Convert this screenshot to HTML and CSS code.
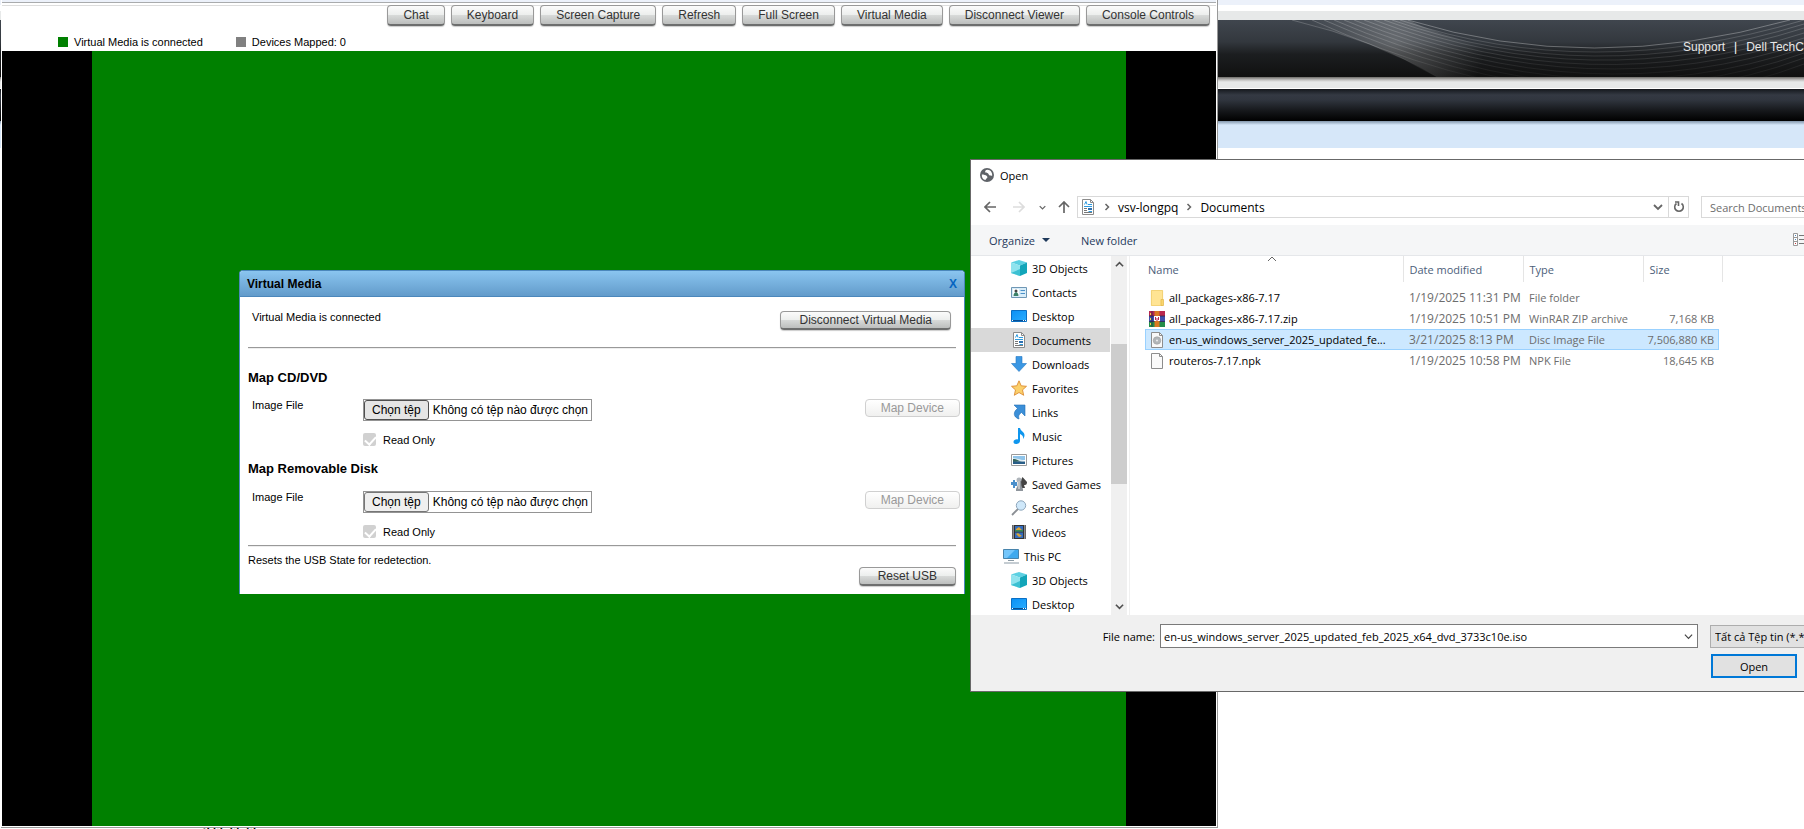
FILE: index.html
```html
<!DOCTYPE html>
<html lang="en">
<head>
  <meta charset="UTF-8" />
  <meta name="viewport" content="width=device-width, initial-scale=1.0" />
  <title>Virtual Console</title>
  <link rel="stylesheet" href="styles.css">
</head>
<body>
  <svg class="sprite" aria-hidden="true">
    <linearGradient id="blue" x1="0" y1="0" x2="1" y2="1">
      <stop offset="0" stop-color="#0a90f5" />
      <stop offset="1" stop-color="#2aadff" />
    </linearGradient>
    <symbol id="i-objects" viewBox="0 0 16 16">
      <path fill="#5cd0e2" d="M0 2.500L8 0l8 2.500-7 3z" />
      <path fill="#8fe3ee" d="M0 2.500l9 3V16l-9-3z" />
      <path fill="#12a5b9" d="M16 2.500l-7 3V16l7-3z" />
      <path fill="#3cc0d2" d="M0 13l9-4v7z" />
    </symbol>
    <symbol id="i-contacts" viewBox="0 0 16 16">
      <path fill="#d9edf9" stroke="#6f97b5" d="M.5 3.500h15v10H.5z" />
      <path fill="#fff" d="M2 5h6v7H2z" />
      <circle cx="5" cy="7" r="1.500" fill="#444" />
      <path fill="#3b8068" d="M2.500 12c0-5 5-5 5 0z" />
      <path stroke="#4a90c8" d="M9.500 6.500H14M9.500 9.500H14" />
    </symbol>
    <symbol id="i-desktop" viewBox="0 0 16 16">
      <path fill="url(#blue)" stroke="#0a6fc4" d="M.5 2.500h15v11H.5z" />
      <path fill="#084f93" d="M1 12h14v1H1z" />
      <path fill="#fff" d="M1 12h1v1H1zM12 12h1v1h-1zM14 12h1v1h-1z" />
    </symbol>
    <symbol id="i-documents" viewBox="0 0 16 16">
      <path fill="#fff" stroke="#8b8b8b" d="M2.500.5h8l3 3v12h-11z" />
      <path fill="none" stroke="#8b8b8b" d="M10.500.5v3h3" />
      <path fill="none" stroke="#2d9be0" d="M4.500 5.500L6 2.500l1 3M8 5.500h4M4 7.500h8M8.500 12.500H12" />
      <path fill="none" stroke="#777" d="M4 9.500h3M8.500 9.500H12M4 11.500h3M4 13.500h8" />
      <path fill="#2d6fb0" d="M8 9h4v2H8z" />
    </symbol>
    <symbol id="i-downloads" viewBox="0 0 16 16">
      <path fill="#3b97e3" stroke="#2277c4" stroke-width=".6" d="M5 .5h6v7h4.500L8 15.500.5 7.500H5z" />
    </symbol>
    <symbol id="i-favorites" viewBox="0 0 16 16">
      <path fill="#fbd06b" stroke="#dc8c34" stroke-width=".9" d="M8 .8l2.200 5 5.300.5-4 3.600 1.200 5.400L8 12.500l-4.700 2.800 1.200-5.400-4-3.600 5.300-.5z" />
    </symbol>
    <symbol id="i-links" viewBox="0 0 16 16">
      <path fill="#3b8fd8" stroke="#2370b5" stroke-width=".6" d="M3 1h11v11l-3.500-3.500C8 10 7 12 8 15c-6-2-6-7-1.500-10.500z" />
    </symbol>
    <symbol id="i-music" viewBox="0 0 16 16">
      <path fill="#0f96ee" d="M7 0h2c.5 3 4.500 4 4.500 7 0 2-1 3.500-1.500 4 .5-3-.8-4-3-5v7c0 2-2 3-4 3-1.500 0-2.500-1-2.500-2C2.500 12 5 11 7 11.500z" />
    </symbol>
    <symbol id="i-pictures" viewBox="0 0 16 16">
      <path fill="#fff" stroke="#9a9a9a" d="M.5 2.500h15v11H.5z" />
      <path fill="#8fc4ea" d="M2 4h12v4H2z" />
      <path fill="#dcebf2" d="M2 6l6 1 6 2H2z" />
      <path fill="#37675c" d="M2 7c4 0 6 2 9 2.500L2 10z" />
      <path fill="#285d87" d="M2 9.500h12V12H2z" />
    </symbol>
    <symbol id="i-games" viewBox="0 0 16 16">
      <path fill="#444" d="M11.500 1L16 6c0 3-1.500 3-3 3l1 3h-4V4z" />
      <path fill="#4a8fcb" d="M0 6h2V4h2v2h2v4H4v2H2V9H0z" />
      <circle cx="8" cy="4" r="2.500" fill="#aeb4ba" />
      <path fill="#8e959c" d="M7 5h3l.5 5 1.500 3v2H5v-2l1.500-3z" />
      <path stroke="#eceff1" d="M8 5v8" />
    </symbol>
    <symbol id="i-search" viewBox="0 0 16 16">
      <path stroke="#8b8f94" stroke-width="1.800" d="M1 15l6-6" />
      <circle cx="10" cy="5.500" r="4.700" fill="#cfe8fa" stroke="#8ea6bb" />
    </symbol>
    <symbol id="i-videos" viewBox="0 0 16 16">
      <path fill="#333" d="M1 1h14v14H1z" />
      <path stroke="#eee" stroke-width="1.500" stroke-dasharray="1 1" d="M2.200 1.500v13.500M13.800 1.500v13.500" />
      <path fill="#326cc0" d="M4 2h8v5.500H4zM4 8.500h8V14H4z" />
      <path fill="#d9a336" d="M5 5l3-2 3 3v1H5zM5 10l2-1 4 3-3 1z" />
      <path fill="#3b8b51" d="M4 6h8v1.500H4z" />
    </symbol>
    <symbol id="i-pc" viewBox="0 0 16 16">
      <path fill="#3fa9ee" stroke="#4884ac" d="M.5 1.500h15v9H.5z" />
      <path fill="#74c6fb" d="M1 2h11L4 10H1z" />
      <path stroke="#8b9aa5" d="M5 12.500h6M1 15h15" />
    </symbol>
    <symbol id="i-folder" viewBox="0 0 16 16">
      <path fill="#ffe493" stroke="#efc75b" stroke-width=".8" d="M2.400.4h11.200v15.200H2.400z" />
      <path fill="#f9d66e" stroke="#e4b84c" stroke-width=".7" d="M12 9.500h2.500v6H12z" />
    </symbol>
    <symbol id="i-zip" viewBox="0 0 16 16">
      <path fill="#b8284f" d="M0 0h16v5H0z" />
      <path fill="#3e4fae" d="M0 5h16v6H0z" />
      <path fill="#228c49" d="M0 11h16v5H0z" />
      <path stroke="#2c2140" stroke-width=".7" d="M0 5h16M0 10.500h16M3 0v16" />
      <path fill="#d97923" d="M5.500 0h5v16h-5z" />
      <path fill="#fff" d="M5 5h6v5H5z" />
      <path fill="none" stroke="#b8284f" d="M6.500 6v3M9.500 6v3M8 7v3" />
      <path fill="#f0d34a" d="M1 2h1v2H1zM1 7h1v2H1zM1 12h1v2H1z" />
    </symbol>
    <symbol id="i-disc" viewBox="0 0 16 16">
      <path fill="#f8f8f8" stroke="#8d8d8d" d="M2.500.5h8l3 3v12h-11z" />
      <path fill="none" stroke="#8d8d8d" d="M10.500.5v3h3" />
      <circle cx="8" cy="8.500" r="3.800" fill="#b1b5b8" stroke="#999" stroke-width=".5" />
      <circle cx="8" cy="8.500" r="1" fill="#eee" />
    </symbol>
    <symbol id="i-file" viewBox="0 0 16 16">
      <path fill="#fafafa" stroke="#8d8d8d" d="M2.500.5h8l3 3v12h-11z" />
      <path fill="none" stroke="#8d8d8d" d="M10.500.5v3h3" />
    </symbol>
    <symbol id="i-down" viewBox="0 0 10 10">
      <path fill="none" stroke="currentColor" stroke-width="1.800" d="M1 3l4 4 4-4" />
    </symbol>
    <symbol id="i-right" viewBox="0 0 10 10">
      <path fill="none" stroke="#666" stroke-width="1.500" d="M3.500 2L6.500 5 3.500 8" />
    </symbol>
    <symbol id="i-arrow" viewBox="0 0 12 12">
      <path fill="none" stroke="currentColor" stroke-width="1.700" d="M6 1L1 6l5 5M1 6h11" />
    </symbol>
  </svg>

  <!-- management page behind the windows -->
  <div class="page">
    <div class="page-top"></div>
    <header class="banner">
      <svg class="banner-art" viewBox="0 0 604 57" aria-hidden="true">
        <defs>
          <radialGradient id="sheen" gradientUnits="userSpaceOnUse" cx="195" cy="22" r="90">
            <stop offset="0" stop-color="#fff" stop-opacity=".24" />
            <stop offset="1" stop-color="#fff" stop-opacity="0" />
          </radialGradient>
          <linearGradient id="fade" gradientUnits="userSpaceOnUse" x1="0" y1="0" x2="0" y2="57">
            <stop offset="0" stop-color="#fff" stop-opacity=".2" />
            <stop offset=".6" stop-color="#fff" stop-opacity=".12" />
            <stop offset="1" stop-color="#fff" stop-opacity=".03" />
          </linearGradient>
        </defs>
        <path fill="url(#sheen)" d="M92 0Q175 20 237 57H330V36Q250 20 208 0z" />
        <g fill="none" stroke="url(#fade)">
          <path d="M92 0Q175 20 237 57" />
          <path stroke="#fff" stroke-opacity=".3" d="M208 0Q390 56 590 0" />
          <path d="M200 0Q390 64 604 0M192 0Q390 70 604 4M184 0Q390 76 604 8M174 0Q390 82 604 13M164 0Q390 88 604 18M154 0Q390 95 604 23M144 0Q390 102 604 28M134 0Q390 110 604 33M124 0Q390 118 604 38M112 0Q390 126 604 44" />
        </g>
      </svg>
      <nav class="banner-links">
        <a href="#">Support</a>
        <span>|</span>
        <a href="#">Dell TechCenter</a>
      </nav>
    </header>
    <div class="gap-bar"></div>
    <div class="nav-bar"></div>
    <div class="sub-bar"></div>
    <div class="firmware">2.65.65.65</div>
  </div>

  <div class="viewer">
    <div class="toolbar">
      <button type="button" class="btn">Chat</button>
      <button type="button" class="btn">Keyboard</button>
      <button type="button" class="btn">Screen Capture</button>
      <button type="button" class="btn">Refresh</button>
      <button type="button" class="btn">Full Screen</button>
      <button type="button" class="btn">Virtual Media</button>
      <button type="button" class="btn">Disconnect Viewer</button>
      <button type="button" class="btn">Console Controls</button>
    </div>
    <div class="status">
      <span class="status-item on">Virtual Media is connected</span>
      <span class="status-item">Devices Mapped: 0</span>
    </div>
    <div class="stage">
      <div class="screen"></div>
    </div>
  </div>

  <section class="vm">
    <header class="vm-header">
      <h1>Virtual Media</h1>
      <button type="button" class="vm-close">X</button>
    </header>
    <div class="vm-body">
      <div class="vm-state">
        <span>Virtual Media is connected</span>
        <button type="button" class="btn small">Disconnect Virtual Media</button>
      </div>
      <hr>
      <h2>Map CD/DVD</h2>
      <div class="vm-row">
        <span class="vm-label">Image File</span>
        <div class="file-box">
          <button type="button" class="pick active">Chọn tệp</button>
          <span>Không có tệp nào được chọn</span>
        </div>
        <button type="button" class="btn small" disabled>Map Device</button>
      </div>
      <div class="vm-check">
        <input type="checkbox" id="roCd" checked disabled />
        <label for="roCd">Read Only</label>
      </div>
      <h2>Map Removable Disk</h2>
      <div class="vm-row">
        <span class="vm-label">Image File</span>
        <div class="file-box">
          <button type="button" class="pick">Chọn tệp</button>
          <span>Không có tệp nào được chọn</span>
        </div>
        <button type="button" class="btn small" disabled>Map Device</button>
      </div>
      <div class="vm-check">
        <input type="checkbox" id="roDisk" checked disabled />
        <label for="roDisk">Read Only</label>
      </div>
      <hr class="last">
      <p>Resets the USB State for redetection.</p>
      <div class="vm-reset">
        <button type="button" class="btn small">Reset USB</button>
      </div>
    </div>
  </section>

  <section class="dialog">
    <header class="dialog-title">
      <svg width="14" height="14" viewBox="0 0 14 14" aria-hidden="true">
        <circle cx="7" cy="7" r="7" fill="#5f6368" />
        <path fill="#fff" d="M7.500 1.800C5.500 2 4.500 3.500 5.500 4.500s2.500 0 3 1.500 1 1.500 2 1.500 1 .5 1.700.3C12.500 4.500 10.500 2 7.500 1.800zM1.800 6.500c2 0 4 .5 5 1.500s.7 2-.3 2.500-.5 1-1 1.600C3 11.500 1.500 9.500 1.800 6.500z" />
      </svg>
      <span>Open</span>
    </header>

    <div class="address-row">
      <button type="button" class="icon-btn" aria-label="Back"><svg width="12" height="12"><use href="#i-arrow" /></svg></button>
      <button type="button" class="icon-btn faded" aria-label="Forward"><svg class="flip" width="12" height="12"><use href="#i-arrow" /></svg></button>
      <button type="button" class="icon-btn narrow" aria-label="Recent locations"><svg width="7" height="7"><use href="#i-down" /></svg></button>
      <button type="button" class="icon-btn parent" aria-label="Up"><svg class="up" width="12" height="12"><use href="#i-arrow" /></svg></button>
      <div class="address">
        <svg width="16" height="16"><use href="#i-documents" /></svg>
        <svg width="10" height="10"><use href="#i-right" /></svg>
        <span>vsv-longpq</span>
        <svg width="10" height="10"><use href="#i-right" /></svg>
        <span>Documents</span>
        <button type="button" class="icon-btn drop" aria-label="Previous locations"><svg width="10" height="10"><use href="#i-down" /></svg></button>
        <button type="button" class="icon-btn refresh" aria-label="Refresh">
          <svg width="12" height="12" viewBox="0 0 12 12">
            <path fill="none" stroke="#666" stroke-width="1.600" d="M8.500 2.500a4.300 4.300 0 1 1-5 0M2 1h3.500v4" />
          </svg>
        </button>
      </div>
      <input type="text" class="search" placeholder="Search Documents" aria-label="Search Documents" />
    </div>

    <div class="command-bar">
      <button type="button" class="command">Organize <i class="caret"></i></button>
      <button type="button" class="command">New folder</button>
      <button type="button" class="command view" aria-label="Change view">
        <svg width="24" height="14" viewBox="0 0 24 14">
          <path fill="#fff" stroke="#999" d="M.5.500h4v12h-4zM.5 4.500h4M.5 8.500h4" />
          <path fill="#4b86bd" d="M2 2h1v1H2z" />
          <path fill="#4b86bd" d="M2 6h1v1H2z" />
          <path fill="#c33" d="M2 10h1v1H2z" />
          <path stroke="#777" d="M6 2.500h5M6 6.500h5M6 10.500h5M13 2.500h5M13 6.500h5M13 10.500h5" />
        </svg>
      </button>
    </div>

    <div class="browser">
      <ul class="tree">
        <li><svg width="16" height="16"><use href="#i-objects" /></svg>3D Objects</li>
        <li><svg width="16" height="16"><use href="#i-contacts" /></svg>Contacts</li>
        <li><svg width="16" height="16"><use href="#i-desktop" /></svg>Desktop</li>
        <li class="current"><svg width="16" height="16"><use href="#i-documents" /></svg>Documents</li>
        <li><svg width="16" height="16"><use href="#i-downloads" /></svg>Downloads</li>
        <li><svg width="16" height="16"><use href="#i-favorites" /></svg>Favorites</li>
        <li><svg width="16" height="16"><use href="#i-links" /></svg>Links</li>
        <li><svg width="16" height="16"><use href="#i-music" /></svg>Music</li>
        <li><svg width="16" height="16"><use href="#i-pictures" /></svg>Pictures</li>
        <li><svg width="16" height="16"><use href="#i-games" /></svg>Saved Games</li>
        <li><svg width="16" height="16"><use href="#i-search" /></svg>Searches</li>
        <li><svg width="16" height="16"><use href="#i-videos" /></svg>Videos</li>
        <li class="root"><svg width="16" height="16"><use href="#i-pc" /></svg>This PC</li>
        <li><svg width="16" height="16"><use href="#i-objects" /></svg>3D Objects</li>
        <li><svg width="16" height="16"><use href="#i-desktop" /></svg>Desktop</li>
      </ul>
      <div class="scrollbar">
        <svg class="flip" width="9" height="9"><use href="#i-down" /></svg>
        <div class="track"><div class="thumb"></div></div>
        <svg width="9" height="9"><use href="#i-down" /></svg>
      </div>
      <div class="files">
        <table>
          <thead>
            <tr>
              <th class="name">Name<svg class="sort" width="10" height="6" viewBox="0 0 10 6"><path fill="none" stroke="#666" d="M1 5l4-4 4 4" /></svg></th>
              <th>Date modified</th>
              <th>Type</th>
              <th class="size">Size</th>
            </tr>
          </thead>
          <tbody>
            <tr>
              <td><div class="file"><svg width="16" height="16"><use href="#i-folder" /></svg><span>all_packages-x86-7.17</span></div></td>
              <td class="date">1/19/2025 11:31 PM</td>
              <td>File folder</td>
              <td></td>
            </tr>
            <tr>
              <td><div class="file"><svg width="16" height="16"><use href="#i-zip" /></svg><span>all_packages-x86-7.17.zip</span></div></td>
              <td class="date">1/19/2025 10:51 PM</td>
              <td>WinRAR ZIP archive</td>
              <td>7,168 KB</td>
            </tr>
            <tr class="selected">
              <td><div class="file"><svg width="16" height="16"><use href="#i-disc" /></svg><span>en-us_windows_server_2025_updated_fe...</span></div></td>
              <td class="date">3/21/2025 8:13 PM</td>
              <td>Disc Image File</td>
              <td>7,506,880 KB</td>
            </tr>
            <tr>
              <td><div class="file"><svg width="16" height="16"><use href="#i-file" /></svg><span>routeros-7.17.npk</span></div></td>
              <td class="date">1/19/2025 10:58 PM</td>
              <td>NPK File</td>
              <td>18,645 KB</td>
            </tr>
          </tbody>
        </table>
      </div>
    </div>

    <footer class="dialog-footer">
      <div class="name-row">
        <label for="fileName">File name:</label>
        <div class="combo">
          <input type="text" id="fileName" value="en-us_windows_server_2025_updated_feb_2025_x64_dvd_3733c10e.iso" />
          <svg width="9" height="9" viewBox="0 0 10 10"><path fill="none" stroke="#444" stroke-width="1.300" d="M1 3l4 4 4-4" /></svg>
        </div>
        <select class="filter" aria-label="File type">
          <option>Tất cả Tệp tin (*.*)</option>
        </select>
      </div>
      <button type="button" class="open-btn">Open</button>
    </footer>
  </section>
</body>
</html>
```
FILE: styles.css
```css
* {
  box-sizing: border-box;
}
body {
  margin: 0;
  height: 100vh;
  position: relative;
  overflow: hidden;
  background: #fff;
  font-family: "Liberation Sans", Arial, sans-serif;
  font-size: 11px;
  color: #000;
}
button, input, select {
  font-family: inherit;
  margin: 0;
}
svg {
  flex: none;
}
.sprite {
  position: absolute;
  width: 0;
  height: 0;
}

/* page behind */
.page {
  height: 100%;
}
.page-top {
  height: 20px;
  background: linear-gradient(#ecf1fa 5px, #fff 5px, #fff 11px, #e7e9e9 11px);
}
.banner {
  position: relative;
  display: flex;
  align-items: center;
  justify-content: flex-end;
  height: 57px;
  background: linear-gradient(#40464e, #33383e 38%, #1c1e20 60%, #101010);
}
.banner-art {
  position: absolute;
  top: 0;
  right: 0;
  width: 604px;
  height: 57px;
}
.banner-links {
  position: relative;
  display: flex;
  gap: 9px;
  width: 121px;
  padding-bottom: 4px;
  white-space: nowrap;
  font-size: 12px;
  color: #fff;
}
.banner-links a {
  color: #e8e8e8;
  text-decoration: none;
}
.gap-bar {
  height: 12px;
  background: linear-gradient(#6d6b68, #c4c3c2 3px, #e7e9e9 5px, #e7e9e9 11px, #fff 11px);
}
.nav-bar {
  height: 32px;
  background: linear-gradient(#15181d, #343943 6px, #30353e 11px, #15171a 22px, #000);
}
.sub-bar {
  height: 27px;
  background: linear-gradient(#8296ab, #d6e7f9 4px);
}
.firmware {
  position: absolute;
  left: 203px;
  bottom: -9px;
  line-height: 14px;
  font-size: 12px;
  font-weight: bold;
}

/* console viewer */
.viewer {
  position: absolute;
  top: 0;
  left: 1px;
  right: 586px;
  bottom: 1px;
  display: flex;
  flex-direction: column;
  padding: 0 1px 1px;
  background: #fff;
  border-right: 1px solid #999;
  border-bottom: 1px solid #999;
}
.toolbar {
  display: flex;
  justify-content: flex-end;
  gap: 6px;
  height: 31px;
  padding: 5px 6px 4px 0;
  background: linear-gradient(#ecf1fa 2px, #a9abad 2px, #a9abad 3px, #fff 3px, #fff 5px, #ddd 5px, #ddd 6px, #fff 6px);
}
.btn {
  height: 21px;
  padding: 0 15px 1px;
  border: 1px solid #999;
  border-bottom: 2px solid #6d6e6e;
  border-radius: 4px;
  background: linear-gradient(#fbfbfb, #eceeed 50%, #d8dad9 51%, #bcbebd);
  box-shadow: 0 1px 1px #ccc;
  font-size: 12px;
  line-height: 14px;
  color: #333;
  white-space: nowrap;
}
.btn.small {
  height: 19px;
  padding: 0 18px 1px;
}
.btn.small:disabled {
  height: 18px;
  padding: 0 15px;
  border: 1px solid #d0d0d0;
  background: linear-gradient(#fff, #f0f0ef);
  box-shadow: none;
  color: #999;
}
.status {
  display: flex;
  gap: 33px;
  height: 20px;
  padding: 4px 0 0 56px;
}
.status-item {
  display: flex;
  align-items: center;
  height: 14px;
}
.status-item::before {
  content: "";
  width: 10px;
  height: 10px;
  margin-right: 6px;
  background: gray;
}
.status-item.on::before {
  background: green;
}
.stage {
  flex: 1;
  display: flex;
  padding: 0 90px;
  background: #000;
}
.screen {
  flex: 1;
  background: green;
}

/* virtual media window */
.vm {
  position: absolute;
  top: 270px;
  left: 239px;
  width: 726px;
  background: #fff;
  border: 1px solid #4b87bb;
  border-bottom: 0;
  border-radius: 4px 4px 0 0;
}
.vm-header {
  display: flex;
  align-items: center;
  justify-content: space-between;
  height: 26px;
  padding: 0 7px;
  border-bottom: 1px solid #4b87bb;
  border-radius: 3px 3px 0 0;
  background: linear-gradient(#8ac5f0, #629bca);
}
.vm-header h1 {
  margin: 0;
  font-size: 12px;
}
.vm-close {
  padding: 0;
  border: 0;
  background: none;
  font-size: 12px;
  font-weight: bold;
  color: #0664c0;
}
.vm-body {
  padding: 14px 8px 8px;
}
.vm-state {
  display: flex;
  justify-content: space-between;
  height: 36px;
  padding: 0 5px 0 4px;
  line-height: 13px;
}
.vm hr {
  height: 2px;
  margin: 0;
  border: 0;
  border-top: 1px solid #999;
  border-bottom: 1px solid #eee;
}
.vm h2 {
  height: 30px;
  margin: 20px 0 0;
  font-size: 13px;
  line-height: 18px;
}
.vm-row {
  display: flex;
  align-items: flex-start;
  height: 34px;
  margin-right: -4px;
}
.vm-label {
  width: 115px;
  padding-left: 4px;
  line-height: 13px;
}
.file-box {
  display: flex;
  align-items: center;
  height: 22px;
  margin-right: auto;
  padding-right: 3px;
  border: 1px solid #949494;
  font-size: 12px;
}
.pick {
  height: 20px;
  margin-right: 4px;
  padding: 0 7px;
  border: 1px solid #767676;
  border-radius: 3px;
  background: #efefef;
  font-size: 12px;
}
.pick.active {
  border-color: #4f4f4f;
  background: #e5e5e5;
}
.vm-check {
  display: flex;
  align-items: center;
  gap: 7px;
  height: 13px;
  padding-left: 115px;
}
.vm-check input {
  appearance: none;
  width: 13px;
  height: 13px;
  border-radius: 2px;
  background: #d1d1d1;
}
.vm-check input::before {
  content: "";
  display: block;
  width: 5px;
  height: 9px;
  margin: 1px 4px;
  border: solid #fff;
  border-width: 0 2px 2px 0;
  transform: rotate(42deg);
}
.vm-check + h2 {
  margin-top: 14px;
  height: 31px;
}
.vm hr.last {
  margin-top: 7px;
}
.vm p {
  margin: 0;
  padding-top: 6px;
  line-height: 14px;
}
.vm-reset {
  display: flex;
  justify-content: flex-end;
}

/* file dialog, partly off the right edge */
.dialog {
  position: absolute;
  top: 159px;
  left: 970px;
  right: -80px;
  background: #fff;
  border: 1px solid #686868;
  font-family: "Open Sans", "Noto Sans", sans-serif;
  font-size: 11px;
}
.dialog-title {
  display: flex;
  align-items: center;
  gap: 6px;
  height: 30px;
  padding-left: 9px;
}
.address-row {
  display: flex;
  align-items: center;
  height: 35px;
  padding: 6px 0 7px 8px;
}
.icon-btn {
  display: flex;
  align-items: center;
  justify-content: center;
  width: 22px;
  padding: 0;
  border: 0;
  background: none;
  color: #666;
}
.icon-btn.faded {
  margin: 0 5px 0 7px;
  color: #ddd;
}
.icon-btn.narrow {
  width: 14px;
  margin-right: 4px;
}
.icon-btn.parent {
  margin-right: 2px;
}
.flip {
  transform: rotate(180deg);
}
.up {
  transform: rotate(90deg);
}
.address {
  display: flex;
  flex: none;
  align-items: center;
  gap: 6px;
  width: 612px;
  height: 22px;
  margin-right: 12px;
  padding-left: 2px;
  border: 1px solid #d9d9d9;
  font-size: 12px;
}
.address .drop {
  width: 14px;
  margin-left: auto;
}
.address .refresh {
  width: 20px;
  height: 20px;
  margin-left: -3px;
  border-left: 1px solid #d9d9d9;
}
.search {
  flex: 1;
  min-width: 0;
  height: 22px;
  padding: 0 8px;
  border: 1px solid #d9d9d9;
  font-size: 11px;
}
.search::placeholder {
  color: #6d6d6d;
}
.command-bar {
  display: flex;
  align-items: center;
  height: 31px;
  padding-left: 18px;
  background: #f5f6f7;
  border-bottom: 1px solid #e5e7ea;
}
.command {
  display: flex;
  align-items: center;
  gap: 7px;
  margin-right: 31px;
  padding: 0;
  border: 0;
  background: none;
  font-size: 11px;
  color: #1e395b;
}
.command.view {
  margin: 0 66px 0 auto;
}
.caret {
  border: 4px solid transparent;
  border-top-color: #1e395b;
  border-bottom: 0;
}
.browser {
  display: flex;
  height: 359px;
  overflow: hidden;
}
.tree {
  width: 139px;
  margin: 0;
  padding: 0;
  list-style: none;
}
.tree li {
  display: flex;
  align-items: center;
  gap: 5px;
  height: 24px;
  padding-left: 40px;
  white-space: nowrap;
}
.tree li.root {
  padding-left: 32px;
}
.tree li.current {
  background: #d9d9d9;
}
.scrollbar {
  display: flex;
  flex-direction: column;
  align-items: center;
  width: 16px;
  margin-left: 1px;
  padding: 4px 0;
  background: #f0f0f0;
  color: #505050;
}
.track {
  flex: 1;
  width: 100%;
  padding-top: 75px;
}
.thumb {
  height: 140px;
  background: #cdcdcd;
}
.files {
  flex: 1;
  margin-left: 2px;
  padding-left: 15px;
  border-left: 1px solid #f0f0f0;
}
table {
  width: 574px;
  table-layout: fixed;
  border-collapse: collapse;
}
th {
  position: relative;
  width: 120px;
  height: 26px;
  padding: 0 6px;
  border-right: 1px solid #e5e5e5;
  font-weight: normal;
  text-align: left;
  color: #4c607a;
}
th.name {
  width: 258px;
  padding-left: 3px;
}
th.size {
  width: 76px;
  border-right: 0;
}
th.size::after {
  content: "";
  position: absolute;
  top: 0;
  right: -4px;
  width: 1px;
  height: 26px;
  background: #e5e5e5;
}
.sort {
  position: absolute;
  top: 0;
  left: 122px;
}
tbody::before {
  content: "";
  display: block;
  height: 5px;
}
td {
  height: 21px;
  padding: 0 6px;
  line-height: 16px;
  white-space: nowrap;
  color: #6d6d6d;
}
td:first-child {
  padding: 0 0 0 4px;
  color: #000;
}
td.date {
  font-size: 12px;
}
td:last-child {
  padding: 0 5px 0 0;
  text-align: right;
}
.file {
  display: flex;
  align-items: center;
  gap: 4px;
}
tr.selected {
  background: #cce8ff;
  outline: 1px solid #99d1ff;
  outline-offset: -1px;
}
.dialog-footer {
  padding: 9px 0 13px;
  background: #f0f0f0;
}
.name-row {
  display: flex;
  align-items: center;
  margin-bottom: 6px;
}
.name-row label {
  width: 189px;
  padding-right: 5px;
  text-align: right;
}
.combo {
  display: flex;
  align-items: center;
  width: 538px;
  height: 24px;
  margin-right: 12px;
  padding-right: 4px;
  background: #fff;
  border: 1px solid #7a7a7a;
}
.combo input {
  flex: 1;
  padding: 0 3px;
  border: 0;
  outline: 0;
  background: none;
  font-size: 11px;
}
.filter {
  appearance: none;
  flex: 1;
  height: 23px;
  padding: 0 4px;
  border: 1px solid #adadad;
  border-radius: 0;
  background: #e1e1e1;
  font-size: 11px;
  color: #000;
}
.open-btn {
  display: block;
  width: 86px;
  height: 24px;
  margin-left: 740px;
  padding: 0;
  border: 2px solid #0078d7;
  background: #e1e1e1;
  font-size: 11px;
}
```
